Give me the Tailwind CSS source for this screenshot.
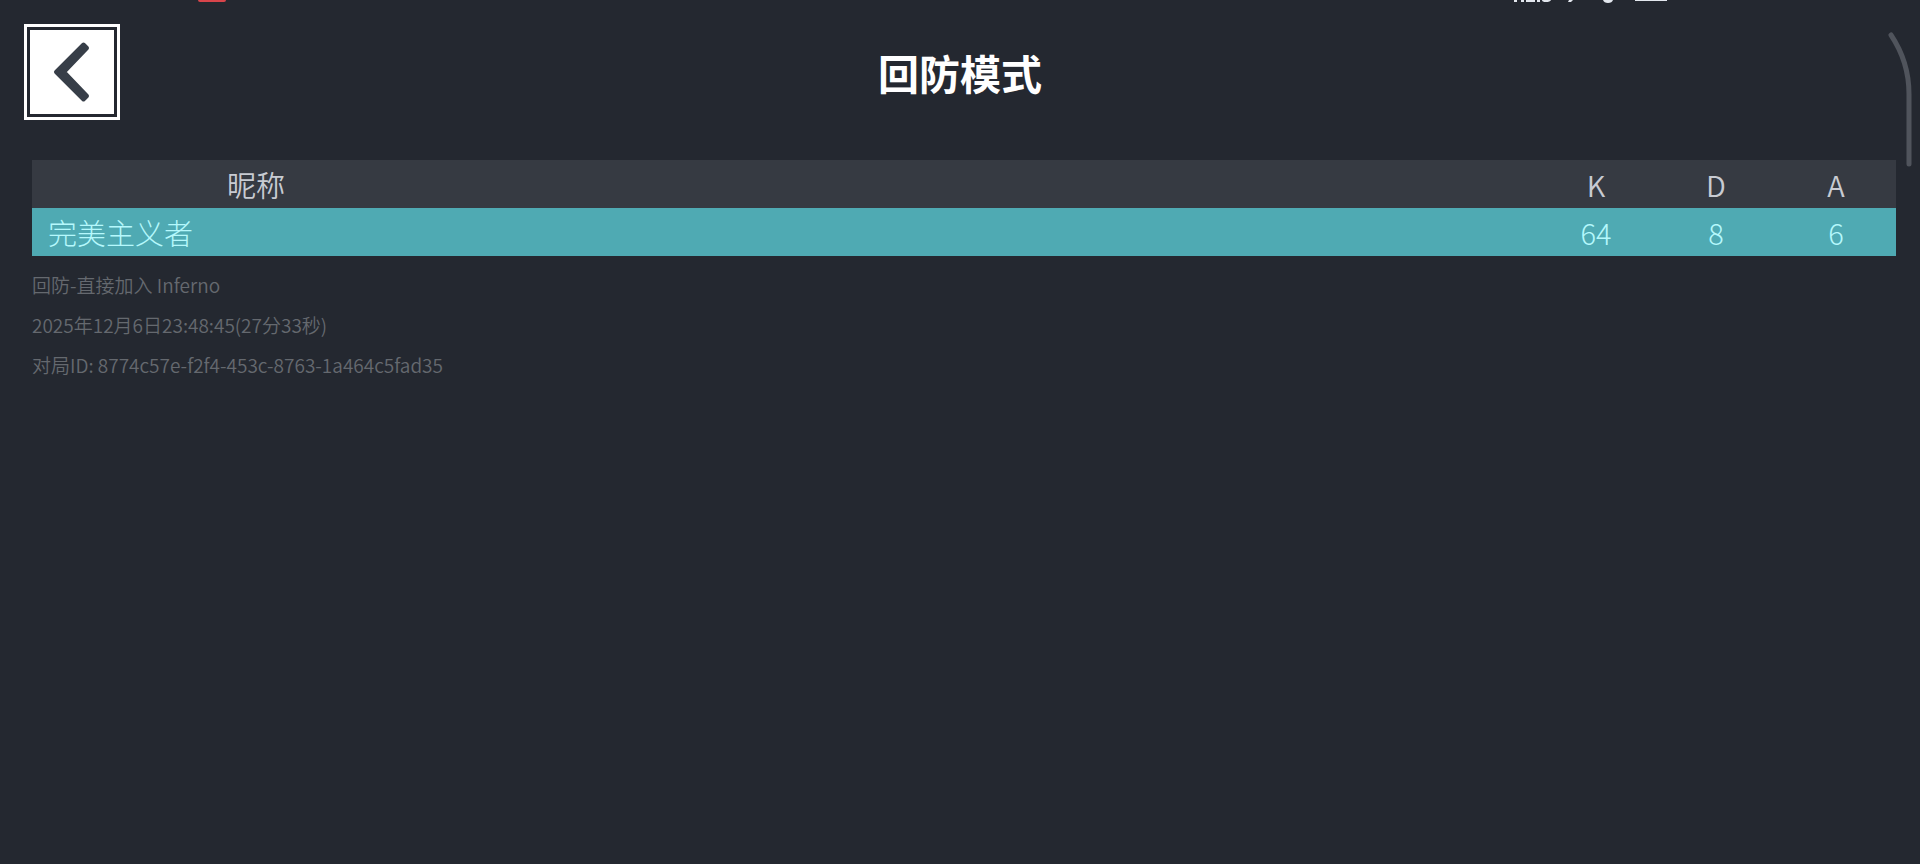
<!DOCTYPE html>
<html lang="zh-CN">
<head>
<meta charset="utf-8">
<meta name="viewport" content="width=device-width, initial-scale=1">
<title>回防模式</title>
<script src="https://cdn.jsdelivr.net/npm/@tailwindcss/browser@4"></script>
</head>
<body class="relative min-h-screen overflow-x-hidden bg-[#242830] font-['Noto_Sans_CJK_SC',sans-serif]">
<!-- Lower edges of the system status icons -->
<div class="absolute top-0 left-[198px] h-[2px] w-7 rounded-b-full bg-[#d8454b]" aria-hidden="true"></div>
<svg class="absolute top-0 right-[250px] h-1 w-[158px]" viewBox="0 0 158 4" fill="#e3e7ee" aria-hidden="true">
  <path d="M2 0h3v2h-3zM9 0h3v2h-3zM14 0h9v2h-9zM25 0h3v2h-3zM30 0h9q-1 2-5 2t-4-2zM57 0h4l-2 2h-3zM91 0h10q-1 3-5 3t-5-3zM123 0h32v1h-32z"/>
</svg>
<!-- Edge handle -->
<svg class="absolute top-8 right-2 h-[136px] w-6" viewBox="0 0 24 136" fill="none" stroke="#50545c" stroke-width="5" stroke-linecap="round" aria-hidden="true">
  <path d="M3 3C15 21 21 39 21 62V132"/>
</svg>
<header class="grid grid-cols-[1fr_auto_1fr] items-start px-6 pt-6">
  <button type="button" aria-label="返回" class="flex size-24 items-center justify-center border-3 border-white bg-[#242830] p-[3px]">
    <span class="flex size-full items-center justify-center bg-white">
      <svg class="h-16 w-10" viewBox="0 0 40 64" fill="#373e48" stroke="#373e48" stroke-width="4" stroke-linejoin="round" aria-hidden="true"><path d="M4 32L31.5 4.5L35 8L12 32L35 56L31.5 59.5Z"/></svg>
    </span>
  </button>
  <h1 class="pt-[18px] text-[41px] leading-[60px] font-bold text-white">回防模式</h1>
</header>
<main class="pt-10 pr-6 pl-8">
  <table class="w-full table-fixed border-collapse text-[29px] leading-[48px] font-[350]">
    <colgroup><col><col class="w-[120px]"><col class="w-[120px]"><col class="w-[120px]"></colgroup>
    <thead>
      <tr class="h-12 bg-[#363a42] text-[#c8cbd2]">
        <th scope="col" class="p-0 font-[350]"><span class="block w-[448px] text-center">昵称</span></th>
        <th scope="col" class="p-0 font-[350]">K</th>
        <th scope="col" class="p-0 font-[350]">D</th>
        <th scope="col" class="p-0 font-[350]">A</th>
      </tr>
    </thead>
    <tbody>
      <tr class="h-12 bg-[#4faab3] text-center font-light text-[#b5f8fc]">
        <td class="p-0 pl-4 text-left">完美主义者</td>
        <td class="p-0">64</td>
        <td class="p-0">8</td>
        <td class="p-0">6</td>
      </tr>
    </tbody>
  </table>
  <div class="pt-[9px] text-[19px] leading-[40px] font-[350] text-[#65696f]">
    <p>回防-直接加入 Inferno</p>
    <p>2025年12月6日23:48:45(27分33秒)</p>
    <p>对局ID: 8774c57e-f2f4-453c-8763-1a464c5fad35</p>
  </div>
</main>
</body>
</html>
